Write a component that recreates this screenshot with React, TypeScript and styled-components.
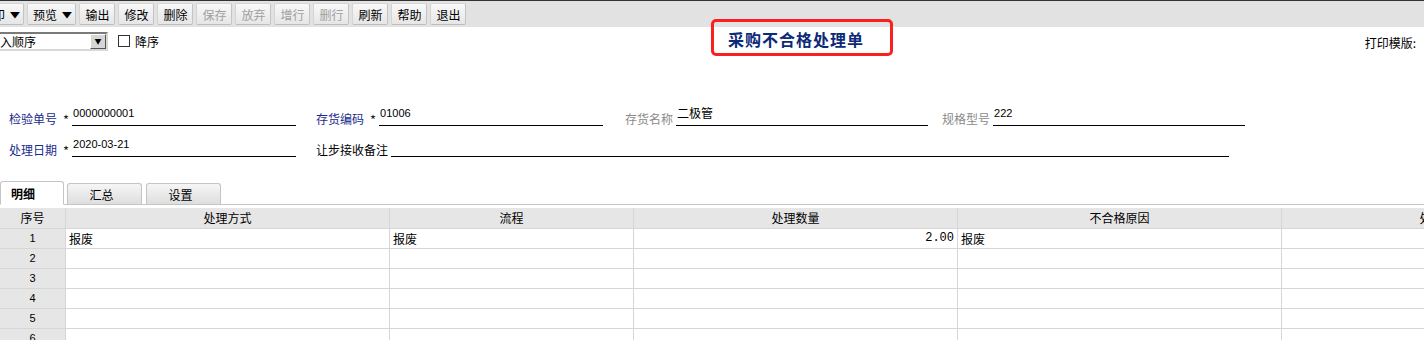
import React from 'react';
import styled, { createGlobalStyle } from 'styled-components';

const GlobalStyle = createGlobalStyle`
	html, body {
		margin: 0;
		padding: 0;
		background: #ffffff;
		overflow: hidden;
	}
	body {
		font-family: "Noto Sans CJK SC", "Liberation Sans", sans-serif;
		font-size: 12px;
		color: #000;
	}
`;

const toolButtons = [
	{ text: '打印', menu: true },
	{ text: '预览', menu: true },
	{ text: '输出' },
	{ text: '修改' },
	{ text: '删除' },
	{ text: '保存', disabled: true },
	{ text: '放弃', disabled: true },
	{ text: '增行', disabled: true },
	{ text: '删行', disabled: true },
	{ text: '刷新' },
	{ text: '帮助' },
	{ text: '退出' },
];

const columns = [
	{ title: '序号', width: 66 },
	{ title: '处理方式', width: 324 },
	{ title: '流程', width: 244 },
	{ title: '处理数量', width: 324 },
	{ title: '不合格原因', width: 324 },
	{ title: '处理说明', width: 324 },
];

const rows = [
	['报废', '报废', '2.00', '报废', ''],
	['', '', '', '', ''],
	['', '', '', '', ''],
	['', '', '', '', ''],
	['', '', '', '', ''],
	['', '', '', '', ''],
];

export default function App() {
	return (
		<Page>
			<GlobalStyle />
			<Toolbar>
				{toolButtons.map((b, i) => (
					<ToolButton key={b.text} $disabled={b.disabled} $first={i === 0} $menu={b.menu}>
						{b.text}
						{b.menu && <Caret>▼</Caret>}
					</ToolButton>
				))}
			</Toolbar>

			<HeadRow>
				<SortGroup>
					<SelectBox>
						<span>录入顺序</span>
						<SelectArrow>▼</SelectArrow>
					</SelectBox>
					<CheckLabel>
						<CheckBox />
						降序
					</CheckLabel>
				</SortGroup>
				<Title>采购不合格处理单</Title>
				<PrintTpl>打印模版:</PrintTpl>
			</HeadRow>

			<Form>
				<FormRow>
					<Field $w={307}>
						<Label $kind="req">检验单号</Label>
						<Star>*</Star>
						<Value $w={224}>0000000001</Value>
					</Field>
					<Field $w={309}>
						<Label $kind="req">存货编码</Label>
						<Star>*</Star>
						<Value $w={224}>01006</Value>
					</Field>
					<Field $w={317}>
						<Label $kind="ro">存货名称</Label>
						<Value $w={252} $cjk>二极管</Value>
					</Field>
					<Field>
						<Label $kind="ro">规格型号</Label>
						<Value $w={252}>222</Value>
					</Field>
				</FormRow>
				<FormRow>
					<Field $w={307}>
						<Label $kind="req">处理日期</Label>
						<Star>*</Star>
						<Value $w={224}>2020-03-21</Value>
					</Field>
					<Field>
						<Label>让步接收备注</Label>
						<Value $w={838}></Value>
					</Field>
				</FormRow>
			</Form>

			<Tabs>
				<Tab $active>明细</Tab>
				<Tab>汇总</Tab>
				<Tab>设置</Tab>
			</Tabs>

			<Grid>
				<GridRow $head>
					{columns.map(c => (
						<HeadCell key={c.title} $w={c.width}>
							{c.title}
						</HeadCell>
					))}
				</GridRow>
				{rows.map((r, i) => (
					<GridRow key={i}>
						<NumCell $w={columns[0].width}>{i + 1}</NumCell>
						{r.map((v, j) => (
							<Cell key={j} $w={columns[j + 1].width} $right={j === 2}>
								{v}
							</Cell>
						))}
						<Cell $w={columns[5].width} />
					</GridRow>
				))}
			</Grid>
		</Page>
	);
}

const Page = styled.div`
	width: 1424px;
	height: 340px;
	overflow: hidden;
`;

const Toolbar = styled.div`
	display: flex;
	align-items: center;
	gap: 3px;
	height: 26px;
	border-top: 1px solid #333333;
	background: #e2e2e2;
`;

const ToolButton = styled.div<{ $disabled?: boolean; $first?: boolean; $menu?: boolean }>`
	box-sizing: border-box;
	display: flex;
	align-items: center;
	justify-content: ${p => (p.$menu ? 'space-between' : 'center')};
	flex-shrink: 0;
	width: ${p => (p.$menu ? '49px' : '36px')};
	height: 22px;
	padding: 0 4px 0 5px;
	margin-left: ${p => (p.$first ? '-25px' : '0')};
	border: 1px solid #d4d4d4;
	border-right-color: #c4c4c4;
	border-bottom-color: #bdbdbd;
	border-radius: 2px;
	background: linear-gradient(#f8f8f8, #e6e6e6);
	color: ${p => (p.$disabled ? '#a0a0a0' : '#000')};
	font-size: 12px;
	line-height: 21px;
	white-space: nowrap;
`;

const Caret = styled.span`
	font-size: 8px;
	transform: scaleX(1.3);
`;

const HeadRow = styled.div`
	display: flex;
	align-items: center;
	height: 28px;
`;

const SortGroup = styled.div`
	display: flex;
	align-items: center;
	width: 728px;
	flex-shrink: 0;
`;

const SelectBox = styled.div`
	display: flex;
	align-items: center;
	justify-content: space-between;
	box-sizing: border-box;
	width: 123px;
	height: 19px;
	margin-left: -15px;
	padding-left: 1px;
	border: 2px solid #7a7a7a;
	border-right-color: #d8d8d8;
	border-bottom-color: #d8d8d8;
	background: #fff;
	font-size: 12px;
`;

const SelectArrow = styled.span`
	display: flex;
	align-items: center;
	justify-content: center;
	box-sizing: border-box;
	width: 16px;
	height: 15px;
	border: 1px solid #fff;
	border-right-color: #555;
	border-bottom-color: #555;
	background: #d6d6d6;
	font-size: 7px;
`;

const CheckLabel = styled.label`
	display: flex;
	align-items: center;
	gap: 5px;
	margin-left: 10px;
	font-size: 12px;
`;

const CheckBox = styled.span`
	box-sizing: border-box;
	width: 12px;
	height: 12px;
	border: 1px solid #333;
	background: #fff;
`;

const Title = styled.div`
	position: relative;
	margin-bottom: 4px;
	color: #0b2a78;
	font-size: 16px;
	font-weight: bold;
	letter-spacing: 1px;
	line-height: 20px;

	&::after {
		content: '';
		position: absolute;
		left: -17px;
		right: -29px;
		top: -10px;
		bottom: -7px;
		border: 3px solid #fb2020;
		border-radius: 5px;
	}
`;

const PrintTpl = styled.div`
	margin-left: auto;
	margin-right: 8px;
	margin-top: 2px;
	font-size: 12px;
`;

const Form = styled.div`
	display: flex;
	flex-direction: column;
	gap: 12px;
	padding: 52px 0 0 9px;
`;

const FormRow = styled.div`
	display: flex;
	align-items: flex-end;
	height: 19px;
`;

const Field = styled.div<{ $w?: number }>`
	display: flex;
	align-items: flex-end;
	width: ${p => (p.$w ? `${p.$w}px` : 'auto')};
	flex-shrink: 0;
`;

const Label = styled.span<{ $kind?: 'req' | 'ro' }>`
	color: ${p => (p.$kind === 'req' ? '#1a2a8c' : p.$kind === 'ro' ? '#8a8a8a' : '#000')};
	font-size: 12px;
	line-height: 14px;
	margin-right: 3px;
`;

const Star = styled.span`
	margin-left: 3px;
	margin-right: 3px;
	color: #222;
	font-size: 13px;
	line-height: 12px;
`;

const Value = styled.div<{ $w: number; $cjk?: boolean }>`
	box-sizing: border-box;
	width: ${p => p.$w}px;
	height: 19px;
	padding-left: 1px;
	border-bottom: 1px solid #000;
	font-family: ${p => (p.$cjk ? '"Noto Sans CJK SC", sans-serif' : '"Liberation Sans", sans-serif')};
	font-size: ${p => (p.$cjk ? '12px' : '11px')};
	line-height: 12px;
`;

const Tabs = styled.div`
	display: flex;
	align-items: flex-end;
	gap: 3px;
	margin-top: 23px;
	height: 24px;
	border-bottom: 1px solid #c4c4c4;
`;

const Tab = styled.div<{ $active?: boolean }>`
	box-sizing: border-box;
	display: flex;
	align-items: center;
	justify-content: center;
	width: ${p => (p.$active ? '64px' : '75px')};
	height: ${p => (p.$active ? '24px' : '21px')};
	margin-bottom: ${p => (p.$active ? '-1px' : '0')};
	border: 1px solid #c4c4c4;
	border-bottom: ${p => (p.$active ? '1px solid #fff' : 'none')};
	border-radius: 3px 3px 0 0;
	background: ${p => (p.$active ? '#ffffff' : 'linear-gradient(#f6f6f6, #dedede)')};
	font-size: 12px;
	font-weight: ${p => (p.$active ? 'bold' : 'normal')};
	padding-right: ${p => (p.$active ? '18px' : '6px')};
	margin-right: ${p => (p.$active ? '0' : '1px')};
`;

const Grid = styled.div`
	margin-top: 3px;
	width: 1606px;
`;

const GridRow = styled.div<{ $head?: boolean }>`
	display: flex;
	height: ${p => (p.$head ? '20px' : '19px')};
	border-bottom: 1px solid #d6d6d6;
	background: ${p => (p.$head ? '#e6e6e6' : '#fff')};
`;

const BaseCell = styled.div<{ $w: number }>`
	box-sizing: border-box;
	width: ${p => p.$w}px;
	flex-shrink: 0;
	border-right: 1px solid #d6d6d6;
	font-size: 12px;
	line-height: 19px;
	white-space: nowrap;
	overflow: hidden;
`;

const HeadCell = styled(BaseCell)`
	text-align: center;
	line-height: 20px;
`;

const NumCell = styled(BaseCell)`
	background: #e6e6e6;
	text-align: center;
	font-family: "Liberation Sans", sans-serif;
	font-size: 11px;
`;

const Cell = styled(BaseCell)<{ $right?: boolean }>`
	padding: 0 3px;
	text-align: ${p => (p.$right ? 'right' : 'left')};
	font-family: ${p => (p.$right ? '"Liberation Mono", monospace' : '"Noto Sans CJK SC", sans-serif')};
`;
